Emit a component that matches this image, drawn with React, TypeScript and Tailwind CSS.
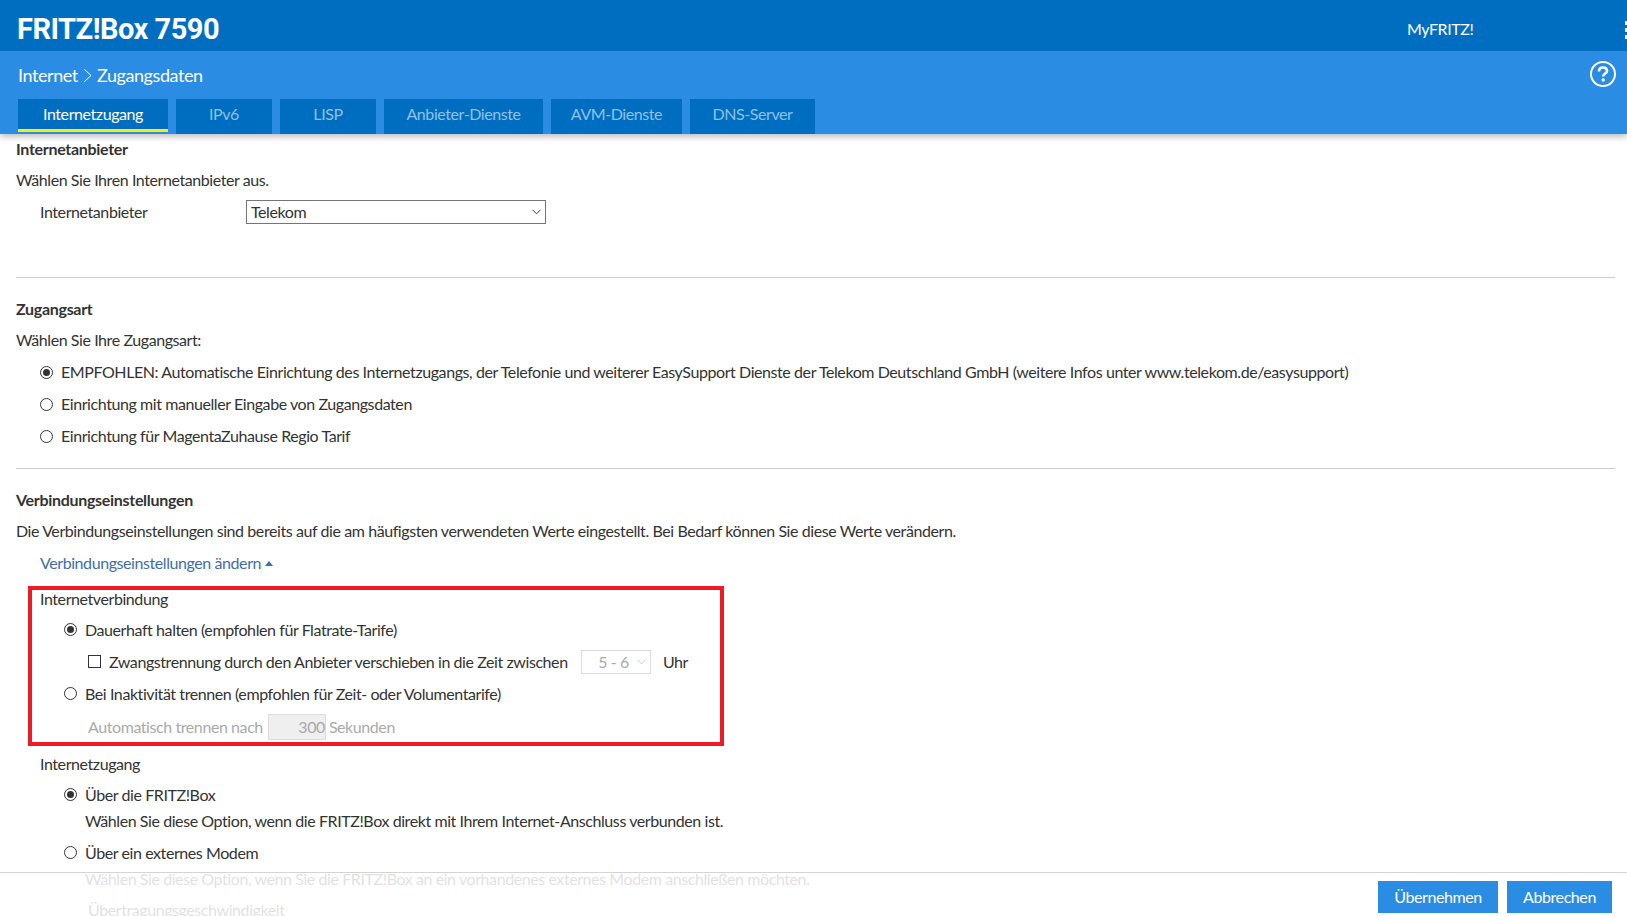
const font = "font-['Lato','Noto_Sans',sans-serif]";

const tabs = [
  { label: "Internetzugang", w: "w-[150px]", active: true },
  { label: "IPv6", w: "w-[96px]" },
  { label: "LISP", w: "w-[96px]" },
  { label: "Anbieter-Dienste", w: "w-[159px]" },
  { label: "AVM-Dienste", w: "w-[131px]" },
  { label: "DNS-Server", w: "w-[125px]" },
];

const Radio = ({ checked = false }: { checked?: boolean }) => (
  <span className="w-[13px] h-[13px] mb-[2px] rounded-full border border-[#333] flex items-center justify-center shrink-0 bg-white">
    {checked && <span className="w-[7px] h-[7px] rounded-full bg-[#333]" />}
  </span>
);

const RadioRow = ({ checked, children, tight, lift }: { checked?: boolean; children: string; tight?: boolean; lift?: boolean }) => (
  <div className={`${tight ? "h-[30px]" : "h-8"} pl-[24px] flex items-center gap-[8px]`}>
    <Radio checked={checked} />
    <span className={lift ? "pb-[2px]" : ""}>{children}</span>
  </div>
);

const Chevron = ({ color }: { color: string }) => (
  <svg width="9" height="6" viewBox="0 0 9 6" fill="none" stroke={color} strokeWidth="1">
    <path d="M0.5 0.8 L4.5 4.8 L8.5 0.8" />
  </svg>
);

export default function App() {
  return (
    <div className={`${font} relative h-[916px] w-[1627px] overflow-hidden bg-white text-[16px] tracking-[-0.42px] text-[#333]`}>
      <header className="relative z-10 shadow-[0_3px_6px_rgba(0,0,0,0.25)]">
        <div className="h-[51px] bg-[#006ec0] flex items-center pl-[17px] pt-[8px] text-white">
          <span className="font-['Roboto',sans-serif] font-bold text-[29px] tracking-[-0.5px]">FRITZ!Box 7590</span>
          <span className="ml-[1188px] pb-[2px]">MyFRITZ!</span>
          <span className="ml-auto mr-[-2px] flex flex-col gap-[3px]">
            <i className="block w-[4px] h-[4px] bg-white" />
            <i className="block w-[4px] h-[4px] bg-white" />
            <i className="block w-[4px] h-[4px] bg-white" />
          </span>
        </div>
        <div className="h-[83px] bg-[#2a8ce2] flex flex-col text-white">
          <div className="flex items-center h-[48px] px-[18px] text-[18px]">
            <span>Internet</span>
            <svg className="mx-[5px]" width="9" height="15" viewBox="0 0 9 15" fill="none" stroke="white" strokeWidth="1">
              <path d="M1 1 L8 7.5 L1 14" />
            </svg>
            <span>Zugangsdaten</span>
            <svg className="ml-auto mr-[-7px] mb-[3px]" width="26" height="26" viewBox="0 0 26 26" fill="none" stroke="white" strokeWidth="2">
              <circle cx="13" cy="13" r="12" />
              <path d="M9 10.5 C9 7.8 10.8 6.5 13 6.5 C15.3 6.5 17 7.8 17 9.9 C17 12.6 13.2 12.6 13.2 15.6" strokeWidth="2.6" />
              <circle cx="13.2" cy="19" r="1.7" fill="white" stroke="none" />
            </svg>
          </div>
          <nav className="flex gap-[8px] pl-[18px] h-[35px]">
            {tabs.map((t) => (
              <div
                key={t.label}
                className={`${t.w} bg-[#006ec0] flex items-center justify-center ${
                  t.active ? "text-white border-b-[3px] border-[#ffed00] mb-[2px]" : "text-[#8fc1ea] pb-[5px]"
                }`}
              >
                {t.label}
              </div>
            ))}
          </nav>
        </div>
      </header>

      <main className="pl-4 pr-[12px]">
        <section className="border-b border-[#ccc] h-[144px]">
          <h2 className="font-bold tracking-[-0.3px] h-[31px] pb-[2px] flex items-center">Internetanbieter</h2>
          <p className="h-[31px] pb-[2px] flex items-center">Wählen Sie Ihren Internetanbieter aus.</p>
          <div className="flex items-center h-[34px] pl-[24px]">
            <span className="w-[206px] pb-[2px]">Internetanbieter</span>
            <div className="w-[300px] h-[24px] mb-[2px] border border-[#767676] flex items-center justify-between px-[4px]">
              <span>Telekom</span>
              <Chevron color="#333" />
            </div>
          </div>
        </section>

        <section className="border-b border-[#ccc] h-[191px] pt-[17px]">
          <h2 className="font-bold tracking-[-0.3px] h-[30px] pb-[2px] flex items-center">Zugangsart</h2>
          <p className="h-8 pb-[2px] flex items-center">Wählen Sie Ihre Zugangsart:</p>
          <RadioRow checked lift>EMPFOHLEN: Automatische Einrichtung des Internetzugangs, der Telefonie und weiterer EasySupport Dienste der Telekom Deutschland GmbH (weitere Infos unter www.telekom.de/easysupport)</RadioRow>
          <RadioRow lift>Einrichtung mit manueller Eingabe von Zugangsdaten</RadioRow>
          <RadioRow lift>Einrichtung für MagentaZuhause Regio Tarif</RadioRow>
        </section>

        <section className="pt-[17px]">
          <h2 className="font-bold tracking-[-0.3px] h-[30px] pb-[2px] flex items-center">Verbindungseinstellungen</h2>
          <p className="h-8 pb-[2px] flex items-center">Die Verbindungseinstellungen sind bereits auf die am häufigsten verwendeten Werte eingestellt. Bei Bedarf können Sie diese Werte verändern.</p>
          <div className="h-8 pb-[2px] flex items-center pl-[24px] gap-[4px] text-[#3f6ea8]">
            <span>Verbindungseinstellungen ändern</span>
            <span className="w-0 h-0 border-x-[4px] border-x-transparent border-b-[5px] border-b-[#3f6ea8]" />
          </div>

          <div className="ml-[12px] mt-[6px] w-[696px] h-[160px] border-4 border-[#ed1c24] pl-[8px]">
            <div className="h-[24px] pb-[6px] flex items-center">Internetverbindung</div>
            <RadioRow checked>Dauerhaft halten (empfohlen für Flatrate-Tarife)</RadioRow>
            <div className="h-8 flex items-center pl-[48px]">
              <span className="w-[13px] h-[13px] mb-[2px] border border-[#333] shrink-0" />
              <span className="ml-[8px]">Zwangstrennung durch den Anbieter verschieben in die Zeit zwischen</span>
              <div className="ml-auto w-[70px] h-[24px] border border-[#ddd] flex items-center justify-end gap-[8px] pr-[4px] text-[#aaa]">
                <span>5 - 6</span>
                <Chevron color="#ccc" />
              </div>
              <span className="ml-[12px] mr-[32px]">Uhr</span>
            </div>
            <RadioRow>Bei Inaktivität trennen (empfohlen für Zeit- oder Volumentarife)</RadioRow>
            <div className="h-8 mt-[1px] flex items-center pl-[48px] text-[#aaa]">
              <span>Automatisch trennen nach</span>
              <div className="ml-[5px] w-[58px] h-[26px] bg-[#efefef] border border-[#ddd] flex items-center justify-end">300</div>
              <span className="ml-[3px]">Sekunden</span>
            </div>
          </div>

          <div className="pl-[24px] h-[30px] pb-[2px] mt-[4px] flex items-center">Internetzugang</div>
          <div className="pl-[24px]">
            <RadioRow checked tight>Über die FRITZ!Box</RadioRow>
            <p className="pl-[45px] h-[22px] flex items-center">Wählen Sie diese Option, wenn die FRITZ!Box direkt mit Ihrem Internet-Anschluss verbunden ist.</p>
            <div className="h-[6px]" />
            <RadioRow tight>Über ein externes Modem</RadioRow>
            <p className="pl-[45px] h-[22px] flex items-center">Wählen Sie diese Option, wenn Sie die FRITZ!Box an ein vorhandenes externes Modem anschließen möchten.</p>
            <p className="pl-[48px] h-8 mt-[4px] flex items-center">Übertragungsgeschwindigkeit</p>
          </div>
        </section>
      </main>

      <footer className="absolute left-0 right-0 bottom-0 h-[44px] bg-white/85 border-t border-[#d4d4d4] flex justify-end items-start pt-[8px] pr-[15px] gap-[9px] text-white">
        <button className="w-[120px] h-[32px] bg-[#2a8ce2] flex items-center justify-center">Übernehmen</button>
        <button className="w-[105px] h-[32px] bg-[#2a8ce2] flex items-center justify-center">Abbrechen</button>
      </footer>
    </div>
  );
}
